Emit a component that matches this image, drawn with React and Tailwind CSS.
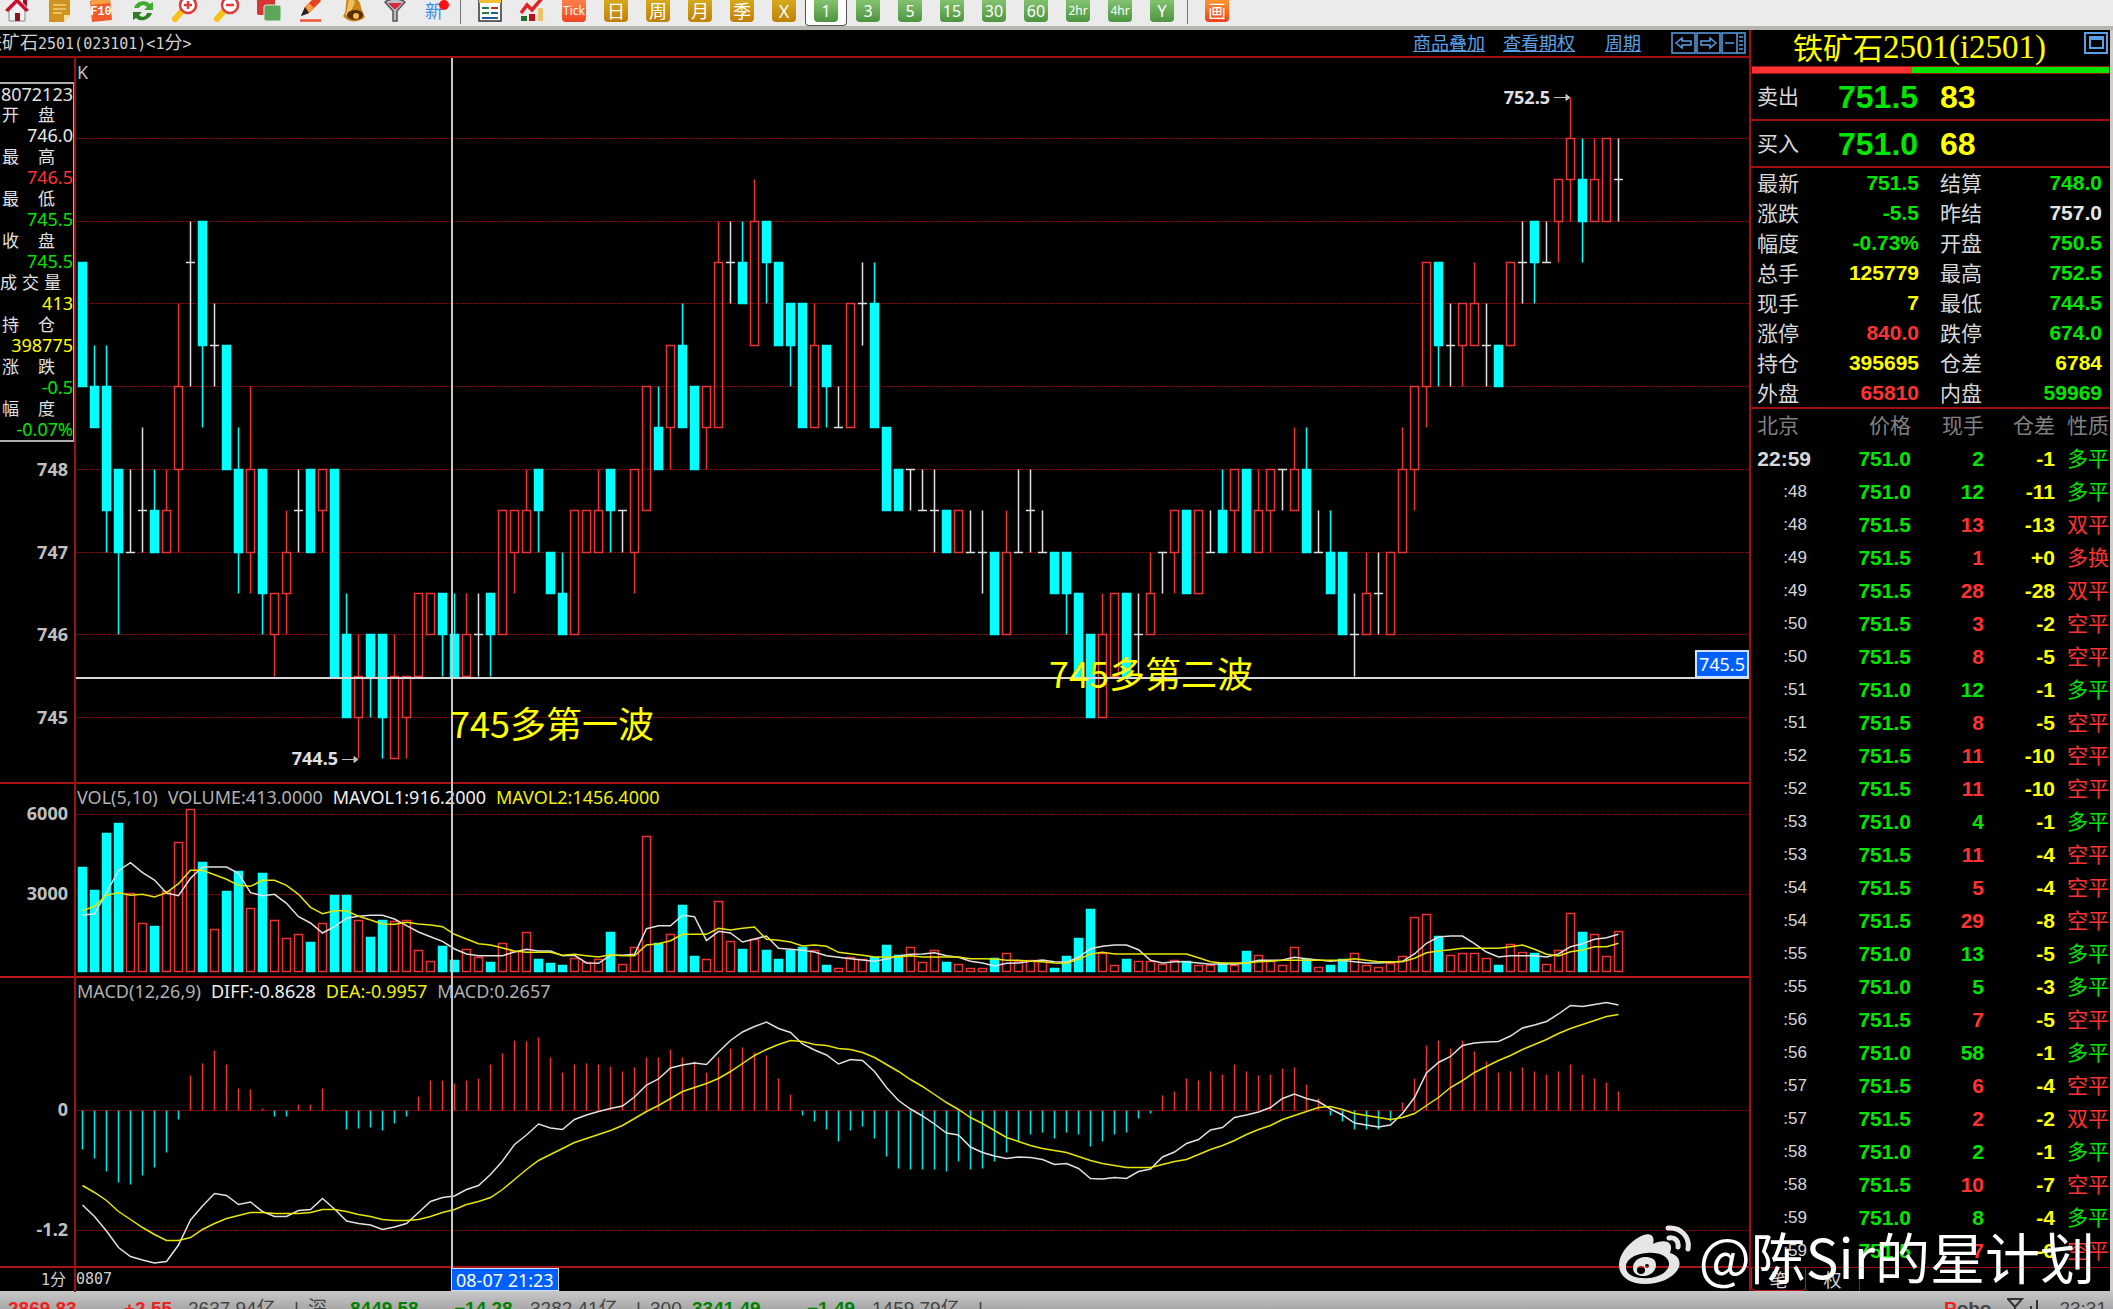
import React from 'react';

// [type, body top, body bottom, high, low] - high/low default to the body
// c = falling, r = rising, w = doji
const candles = [
  ['c', 750.5, 749], ['c', 749, 748.5, 749.5], ['c', 749, 747.5, 749.5, 747], ['c', 748, 747, 748, 746],
  ['w', 747, 747, 748], ['w', 747.5, 747.5, 748.5, 747], ['c', 747.5, 747, 748], ['r', 747.5, 747, 748],
  ['r', 749, 748, 750, 747], ['w', 750.5, 750.5, 751, 749], ['c', 751, 749.5, 751, 748.5], ['w', 749.5, 749.5, 750, 749],
  ['c', 749.5, 748], ['c', 748, 747, 748.5, 746.5], ['r', 748, 747, 749, 746.5], ['c', 748, 746.5, 748, 746],
  ['r', 746.5, 746, 746.5, 745.5], ['r', 747, 746.5, 747.5, 746], ['w', 747.5, 747.5, 748, 747], ['c', 748, 747],
  ['r', 748, 747.5, 748, 747], ['c', 748, 745.5], ['c', 746, 745, 746.5], ['r', 745.5, 745, 746, 744.5],
  ['c', 746, 745.5, 746, 745], ['c', 746, 745, 746, 744.5], ['r', 745.5, 744.5, 746], ['r', 745.5, 745, 745.5, 744.5],
  ['r', 746.5, 745.5], ['r', 746.5, 746], ['c', 746.5, 746, 746.5, 745.5], ['c', 746, 745.5, 746.5],
  ['r', 746, 745.5, 746.5], ['w', 746, 746, 746.5, 745.5], ['c', 746.5, 746, 746.5, 745.5], ['r', 747.5, 746],
  ['r', 747.5, 747, 747.5, 746.5], ['r', 747.5, 747, 748], ['c', 748, 747.5, 748, 747], ['c', 747, 746.5],
  ['c', 746.5, 746, 747], ['r', 747.5, 746], ['r', 747.5, 747], ['r', 747.5, 747, 748],
  ['c', 748, 747.5, 748, 747], ['w', 747.5, 747.5, 747.5, 747], ['r', 748, 747, 748, 746.5], ['r', 749, 747.5],
  ['c', 748.5, 748, 749], ['r', 749.5, 748.5, 749.5, 748], ['c', 749.5, 748.5, 750], ['c', 749, 748],
  ['r', 749, 748.5, 749, 748], ['r', 750.5, 748.5, 751], ['w', 750.5, 750.5, 751, 750], ['c', 750.5, 750, 751],
  ['r', 751, 749.5, 751.5], ['c', 751, 750.5, 751, 750], ['c', 750.5, 749.5], ['c', 750, 749.5, 750, 749],
  ['c', 750, 748.5], ['r', 749.5, 748.5, 750], ['c', 749.5, 749, 749.5, 748.5], ['w', 748.5, 748.5, 749],
  ['r', 750, 748.5], ['w', 750, 750, 750.5, 749.5], ['c', 750, 748.5, 750.5], ['c', 748.5, 747.5],
  ['c', 748, 747.5], ['w', 748, 748, 748, 747.5], ['w', 747.5, 747.5, 748], ['w', 747.5, 747.5, 748, 747],
  ['c', 747.5, 747], ['r', 747.5, 747], ['w', 747, 747, 747.5], ['w', 747, 747, 747.5, 746.5],
  ['c', 747, 746], ['r', 747, 746, 747.5], ['w', 747, 747, 748], ['w', 747.5, 747.5, 748, 747],
  ['w', 747, 747, 747.5], ['c', 747, 746.5], ['c', 747, 746.5, 747, 746], ['c', 746.5, 745.5],
  ['c', 746, 745], ['r', 746, 745, 746.5], ['r', 746.5, 745.5], ['c', 746.5, 745.5],
  ['w', 746, 746, 746.5, 745.5], ['r', 746.5, 746, 747], ['w', 747, 747, 747, 746.5], ['r', 747.5, 747, 747.5, 746.5],
  ['c', 747.5, 746.5], ['r', 747.5, 746.5], ['w', 747, 747, 747.5], ['c', 747.5, 747, 748],
  ['r', 748, 747.5, 748, 747], ['c', 748, 747], ['r', 747.5, 747, 748], ['r', 748, 747.5, 748, 747],
  ['w', 748, 748, 748, 747.5], ['r', 748, 747.5, 748.5], ['c', 748, 747, 748.5], ['w', 747, 747, 747.5],
  ['c', 747, 746.5, 747.5], ['c', 747, 746], ['w', 746, 746, 746.5, 745.5], ['r', 746.5, 746, 747],
  ['w', 746.5, 746.5, 747, 746], ['r', 747, 746], ['r', 748, 747, 748.5], ['r', 749, 748, 749, 747.5],
  ['r', 750.5, 749, 750.5, 748.5], ['c', 750.5, 749.5, 750.5, 749], ['w', 749.5, 749.5, 750, 749], ['r', 750, 749.5, 750, 749],
  ['r', 750, 749.5, 750.5], ['w', 749.5, 749.5, 750, 749], ['c', 749.5, 749], ['r', 750.5, 749.5],
  ['w', 750.5, 750.5, 751, 750], ['c', 751, 750.5, 751, 750], ['w', 750.5, 750.5, 751], ['r', 751.5, 751, 751.5, 750.5],
  ['r', 752, 751.5, 752.5, 751], ['c', 751.5, 751, 752, 750.5], ['r', 751.5, 751, 752], ['r', 752, 751],
  ['w', 751.5, 751.5, 752, 751],
];

// volume bar heights, in thirds of a pixel
const volumes = [
  311, 244, 415, 445, 233, 143, 136, 239, 387, 486, 328, 125, 239, 301, 188, 293, 152, 98, 112, 86, 143, 229, 229, 152, 103,
  153, 150, 152, 62, 31, 76, 32, 66, 43, 28, 85, 60, 116, 35, 23, 18, 40, 28, 35, 117, 22, 71, 404, 83, 112, 199, 45, 35,
  211, 89, 67, 97, 63, 35, 64, 73, 62, 18, 8, 43, 37, 41, 77, 48, 71, 27, 62, 27, 22, 9, 8, 38, 53, 30, 34, 29, 9, 45, 100,
  185, 53, 17, 36, 31, 31, 22, 34, 31, 17, 17, 24, 19, 59, 48, 30, 17, 71, 37, 13, 17, 35, 53, 17, 13, 25, 44, 162, 170,
  104, 48, 53, 53, 40, 18, 80, 58, 54, 21, 62, 175, 117, 112, 45, 120,
];
const volumeTypes =
  'ccccrrcrrrcrccrcrrrcrccrccrrrrccrrcrrrcccrrrcrrrcrccrrrcrccccrcr' +
  'rrcccrrrcrrrcrrrrccccrrcrrrrcrrcrcrrrrcrccrrrrrrrcrrrrcrrcrrrcrrr';

const ma5 = [
  436, 431, 368, 302, 278, 308, 330, 369, 377, 325, 291, 291, 291, 310, 368, 377, 373, 400, 440, 459, 489, 470, 445, 439,
  436, 436, 447, 467, 486, 500, 514, 537, 552, 557, 557, 557, 546, 538, 543, 543, 557, 556, 579, 580, 556, 556, 553, 476,
  467, 467, 436, 440, 512, 484, 489, 516, 507, 498, 535, 538, 541, 546, 557, 562, 566, 570, 574, 567, 558, 553, 552, 548,
  557, 562, 574, 579, 588, 580, 579, 574, 570, 575, 577, 562, 536, 529, 525, 525, 539, 571, 579, 575, 575, 579, 583, 581,
  583, 579, 571, 571, 570, 562, 566, 570, 574, 571, 575, 579, 579, 577, 574, 552, 520, 501, 498, 498, 521, 546, 561, 557,
  557, 557, 561, 552, 530, 521, 508, 503, 493,
];
const ma10 = [
  422, 409, 376, 368, 376, 373, 381, 368, 341, 301, 301, 314, 328, 346, 349, 331, 331, 346, 373, 412, 431, 422, 422, 439,
  450, 462, 463, 457, 462, 465, 470, 493, 507, 521, 525, 534, 543, 547, 547, 547, 556, 553, 557, 561, 554, 557, 557, 525,
  521, 512, 493, 493, 493, 475, 480, 475, 471, 508, 511, 516, 528, 525, 529, 547, 551, 556, 561, 561, 561, 557, 561, 561,
  561, 561, 566, 566, 567, 571, 571, 574, 575, 579, 580, 568, 552, 547, 552, 552, 552, 552, 552, 552, 552, 563, 575, 579,
  579, 579, 575, 574, 571, 571, 571, 571, 571, 570, 566, 571, 575, 575, 575, 565, 548, 543, 539, 535, 535, 535, 535, 530,
  525, 538, 553, 558, 545, 540, 530, 530, 520,
];

// both in pixels above the zero line, diff is worked out from them
const macd = [
  -39, -48, -61, -72, -74, -65, -57, -42, -9, 35, 47, 60, 46, 22, 21, 2, -6, -6, 6, 6, 22, 1, -19, -18, -17, -20, -13, -6,
  14, 30, 30, 27, 30, 32, 46, 57, 70, 69, 73, 53, 38, 46, 47, 46, 44, 39, 43, 53, 53, 61, 53, 49, 38, 53, 62, 63, 58, 55,
  32, 16, -5, -11, -19, -31, -20, -16, -28, -46, -58, -59, -59, -59, -61, -51, -59, -58, -51, -42, -31, -24, -22, -28, -22,
  -24, -36, -31, -24, -22, -8, -3, 15, 19, 32, 30, 39, 36, 46, 39, 35, 36, 42, 43, 26, 12, -5, -11, -19, -19, -19, -11, 8,
  32, 65, 70, 62, 70, 59, 49, 38, 39, 43, 39, 36, 39, 46, 36, 32, 28, 19,
];
const dea = [
  -75, -82, -90, -101, -109, -117, -124, -130, -130, -127, -119, -113, -108, -105, -102, -102, -103, -103, -103, -102, -99,
  -99, -101, -104, -106, -109, -110, -110, -109, -106, -102, -99, -94, -91, -87, -79, -69, -59, -50, -44, -38, -32, -28,
  -24, -20, -15, -8, -1, 5, 12, 19, 23, 27, 32, 39, 47, 55, 61, 66, 70, 69, 66, 65, 62, 61, 58, 53, 46, 39, 31, 24, 16, 8,
  1, -7, -13, -20, -27, -31, -35, -38, -40, -42, -46, -50, -53, -55, -57, -57, -57, -54, -51, -49, -44, -39, -35, -30, -24,
  -19, -15, -9, -5, -1, 3, 4, 1, -3, -5, -7, -9, -7, -3, 5, 13, 23, 30, 38, 44, 50, 55, 61, 66, 71, 77, 82, 86, 90, 94, 96,
];

const quotes = [
  ['最新', '751.5', 'g', '结算', '748.0', 'g'],
  ['涨跌', '-5.5', 'g', '昨结', '757.0', 'w'],
  ['幅度', '-0.73%', 'g', '开盘', '750.5', 'g'],
  ['总手', '125779', 'y', '最高', '752.5', 'g'],
  ['现手', '7', 'y', '最低', '744.5', 'g'],
  ['涨停', '840.0', 'r', '跌停', '674.0', 'g'],
  ['持仓', '395695', 'y', '仓差', '6784', 'y'],
  ['外盘', '65810', 'r', '内盘', '59969', 'g'],
];

const ticks = [
  ['22:59', '751.0', 2, '-1', '多平', 'g'], [':48', '751.0', 12, '-11', '多平', 'g'], [':48', '751.5', 13, '-13', '双平', 'r'],
  [':49', '751.5', 1, '+0', '多换', 'r'], [':49', '751.5', 28, '-28', '双平', 'r'], [':50', '751.5', 3, '-2', '空平', 'r'],
  [':50', '751.5', 8, '-5', '空平', 'r'], [':51', '751.0', 12, '-1', '多平', 'g'], [':51', '751.5', 8, '-5', '空平', 'r'],
  [':52', '751.5', 11, '-10', '空平', 'r'], [':52', '751.5', 11, '-10', '空平', 'r'], [':53', '751.0', 4, '-1', '多平', 'g'],
  [':53', '751.5', 11, '-4', '空平', 'r'], [':54', '751.5', 5, '-4', '空平', 'r'], [':54', '751.5', 29, '-8', '空平', 'r'],
  [':55', '751.0', 13, '-5', '多平', 'g'], [':55', '751.0', 5, '-3', '多平', 'g'], [':56', '751.5', 7, '-5', '空平', 'r'],
  [':56', '751.0', 58, '-1', '多平', 'g'], [':57', '751.5', 6, '-4', '空平', 'r'], [':57', '751.5', 2, '-2', '双平', 'r'],
  [':58', '751.0', 2, '-1', '多平', 'g'], [':58', '751.5', 10, '-7', '空平', 'r'], [':59', '751.0', 8, '-4', '多平', 'g'],
  [':59', '751.5', 7, '-6', '空平', 'r'],
];

const textColors = {
  g: 'text-[#00e600]',
  r: 'text-[#ff3232]',
  y: 'text-[#ffff00]',
  w: 'text-[#e6e6e6]',
};
const strokes = { c: '#00ffff', r: '#f03232', w: '#e0e0e0' };

const barX = (i) => 82.5 + i * 12;
const priceY = (p) => Math.round(80 + (752 - p) * 82.7) + 0.5;

const GridLine = ({ y }) => (
  <line x1="77" x2="100%" y1={y} y2={y} stroke="#900000" strokeDasharray="2 1" shapeRendering="crispEdges" />
);

const AxisLabel = ({ y, children }) => (
  <text x="68" y={y + 6} textAnchor="end" className="fill-[#c0c0c0] text-lg font-bold">{children}</text>
);

const Candle = ({ data, i }) => {
  const [type, top, bottom, high = top, low = bottom] = data;
  const x = barX(i);
  const stroke = strokes[type];
  return (
    <g stroke={stroke}>
      {high > top && <line x1={x} x2={x} y1={priceY(high)} y2={priceY(top)} />}
      {low < bottom && <line x1={x} x2={x} y1={priceY(bottom)} y2={priceY(low)} />}
      {type === 'w' ? (
        <line x1={x - 4.5} x2={x + 4.5} y1={priceY(top)} y2={priceY(top)} />
      ) : (
        <rect x={x - 4} width="8" y={priceY(top)} height={priceY(bottom) - priceY(top)} fill={type === 'c' ? stroke : 'none'} />
      )}
    </g>
  );
};

const PriceChart = () => (
  <svg className="block h-full w-full">
    {[752, 751, 750, 749, 748, 747, 746, 745].map((p) => <GridLine key={p} y={priceY(p)} />)}
    {[748, 747, 746, 745].map((p) => <AxisLabel key={p} y={priceY(p)}>{p}</AxisLabel>)}
    <g strokeWidth="1.5">
      {candles.map((c, i) => <Candle key={i} data={c} i={i} />)}
    </g>
    <g className="fill-[#e0e0e0] text-lg font-bold">
      <text x="1550" y="46" textAnchor="end">752.5</text>
      <text x="338" y="707" textAnchor="end">744.5</text>
    </g>
    <g stroke="#c0c0c0" fill="#c0c0c0">
      <path d="M1554 39.5h15M1566 36.500v6l4-3z" />
      <path d="M342 701.5h15M354 698.500v6l4-3z" />
    </g>
  </svg>
);

const linePoints = (ys) => ys.map((y, i) => `${barX(i)},${(y / 3 - 14).toFixed(1)}`).join(' ');

const VolumeChart = () => (
  <svg className="block h-full w-full">
    <GridLine y={30.5} />
    <GridLine y={110.5} />
    <AxisLabel y={30}>6000</AxisLabel>
    <AxisLabel y={110}>3000</AxisLabel>
    <g strokeWidth="1.5">
      {volumes.map((v, i) => {
        const h = Math.round(v / 3);
        const type = volumeTypes[i];
        return (
          <rect key={i} x={barX(i) - 4} width="8" y={187.5 - h} height={h} stroke={strokes[type]} fill={type === 'c' ? strokes.c : 'none'} />
        );
      })}
    </g>
    <polyline points={linePoints(ma5)} fill="none" stroke="#e0e0e0" strokeWidth="1.5" />
    <polyline points={linePoints(ma10)} fill="none" stroke="#e6e600" strokeWidth="1.5" />
  </svg>
);

const macdZero = 132.5;
const macdPoints = (vs) => vs.map((v, i) => `${barX(i)},${macdZero - v}`).join(' ');

const MacdChart = () => (
  <svg className="block h-full w-full">
    <GridLine y={macdZero} />
    <GridLine y={252.5} />
    <AxisLabel y={132}>0</AxisLabel>
    <AxisLabel y={252}>-1.2</AxisLabel>
    <g strokeWidth="1.5">
      {macd.map((v, i) => (
        <line key={i} x1={barX(i)} x2={barX(i)} y1={macdZero} y2={macdZero - v} stroke={v > 0 ? '#f03232' : '#00e8e8'} />
      ))}
    </g>
    <polyline points={macdPoints(dea.map((d, i) => d + macd[i] / 2))} fill="none" stroke="#e0e0e0" strokeWidth="1.5" />
    <polyline points={macdPoints(dea)} fill="none" stroke="#e6e600" strokeWidth="1.5" />
  </svg>
);

const goldTools = ['日', '周', '月', '季', 'X'];
const greenTools = ['1', '3', '5', '15', '30', '60', '2hr', '4hr', 'Y'];

const iconTools = [
  ['主页', <>
    <path d="M19 3h4v8l-4-4z" fill="#a01020" />
    <path d="M5 14l8-8 8 8v11H5z" fill="#f0f0f0" stroke="#888" />
    <path d="m1 14 12-12 12 12-3 2-9-9-9 9z" fill="#c8102e" />
    <path d="M11 17h5v8h-5z" fill="#8c1420" />
  </>],
  ['新闻', <>
    <path d="M3 1h21v18l-6 7H3z" fill="#cf9420" />
    <path d="M18 26v-7h6z" fill="#f7e2a0" />
    <path d="M7 9h13M7 13h13M7 17h9" stroke="#f0cf80" strokeWidth="1.5" />
  </>],
  ['F10', <>
    <path d="M2 5 22 2l2 22-20 2z" fill="#f05a28" />
    <path d="M3 4 22 2v5L3 9z" fill="#f8a040" />
    <text x="13" y="19" textAnchor="middle" className="fill-white font-['Liberation_Mono',monospace] text-[12px] font-bold">F10</text>
  </>],
  ['刷新', <>
    <path d="M4 12c3-8 12-8 16-4l3-2v8h-9l3-3c-3-3-7-2-8 1z" fill="#43a832" />
    <path d="M22 17c-3 8-12 9-16 5l-3 2v-8h9l-3 3c3 3 7 2 8-2z" fill="#2f7d22" />
  </>],
  ['放大', <>
    <path d="m3 23 6-7" stroke="#f6c21a" strokeWidth="6" strokeLinecap="round" />
    <circle cx="16" cy="9" r="8" fill="#fff" stroke="#e03a3a" strokeWidth="2.5" />
    <path d="M12 9h8M16 5v8" stroke="#e03a3a" strokeWidth="2.5" />
  </>],
  ['缩小', <>
    <path d="m3 23 6-7" stroke="#f6c21a" strokeWidth="6" strokeLinecap="round" />
    <circle cx="16" cy="9" r="8" fill="#fff" stroke="#e03a3a" strokeWidth="2.5" />
    <path d="M12 9h8" stroke="#e03a3a" strokeWidth="2.5" />
  </>],
  ['叠加', <>
    <rect x="1" y="1" width="18" height="18" rx="2" fill="#d83434" />
    <rect x="8" y="9" width="17" height="16" rx="2" fill="#5da55a" stroke="#dfeedd" />
  </>],
  ['画线', <>
    <path d="m3 20 4-9L18 0l5 5-12 12z" fill="#e8401c" />
    <path d="m7 11 4-4 5 5-5 5z" fill="#f79a3a" />
    <path d="m3 20 4-9 4 6z" fill="#222" />
    <path d="M2 24.500h21" stroke="#f0533a" strokeWidth="2.500" />
  </>],
  ['预警', <>
    <path d="M7 3c8-4 14 2 14 9l4 9c-6 6-17 6-22-1 4-5 2-11 4-17z" fill="#c98416" />
    <path d="M9 4c3-1 5 0 6 2l-5 12-5 1c3-5 2-10 4-15z" fill="#f0c060" />
    <ellipse cx="15" cy="19" rx="8" ry="5" fill="#5a2d08" />
    <circle cx="16" cy="20" r="3" fill="#f5c04a" />
  </>],
  ['过滤', <>
    <path d="M3 6c5-4 15-4 20 0l-8 9v10h-4V15z" fill="#b9bec4" stroke="#555" strokeWidth="1.5" />
    <path d="M6 7h14l-6 6h-2z" fill="#d62a3a" />
  </>],
];

const chartTools = [
  ['报价', <>
    <rect x="2" y="1" width="22" height="24" fill="#fff" stroke="#333" strokeWidth="1.5" />
    <path d="M2 1h22v6H2z" fill="#f5c030" />
    <path d="M5 12h7M5 17h7" stroke="#2a7a40" strokeWidth="2" />
    <path d="M14 12h7" stroke="#d22" strokeWidth="2" />
    <path d="M14 17h7M5 22h16" stroke="#235a9a" strokeWidth="2" />
  </>],
  ['走势', <>
    <path d="m2 17 6-8 5 5L24 1" fill="none" stroke="#e02424" strokeWidth="3.500" />
    <path d="M2 20h6v5H2z" fill="#1f6f2c" />
    <path d="M10 18h6v7h-6z" fill="#b11" />
    <path d="M19 12h5v13h-5z" fill="#e9c46a" />
  </>],
];

const ToolButton = ({ label, children }) => (
  <button aria-label={label} className="flex h-[26px] w-[42px] shrink-0 items-end justify-center pb-1">
    {children}
  </button>
);

const Icon = ({ children }) => <svg viewBox="0 0 26 26" className="h-[26px] w-[26px] shrink-0">{children}</svg>;

const tile = 'flex h-[26px] w-6 shrink-0 items-center justify-center rounded pt-1 text-white';

const Toolbar = () => (
  <div className="h-[30px] shrink-0 overflow-hidden border-b-4 border-[#b8b4b0] bg-[#ebebeb]">
    <div className="-ml-1 flex h-[26px]">
      {iconTools.map(([label, art]) => <ToolButton key={label} label={label}><Icon>{art}</Icon></ToolButton>)}
      <ToolButton label="新">
        <span className="relative flex h-[26px] w-6 items-center pt-1 text-lg text-[#3a8ee6]">
          新
          <span className="absolute top-1 right-0 h-2.5 w-2.5 rounded-full bg-[#ff1010]" />
        </span>
      </ToolButton>
      <span className="mr-2 ml-[2px] h-6 w-px bg-[#777]" />
      {chartTools.map(([label, art]) => <ToolButton key={label} label={label}><Icon>{art}</Icon></ToolButton>)}
      <ToolButton><span className={`${tile} bg-linear-to-b from-[#ff8a50] to-[#ee4422] text-xs`}>Tick</span></ToolButton>
      {goldTools.map((t) => (
        <ToolButton key={t}><span className={`${tile} bg-linear-to-b from-[#d8b020] to-[#c08008] text-lg`}>{t}</span></ToolButton>
      ))}
      {greenTools.map((t) => (
        <div key={t} className={t === '1' ? 'rounded-b border border-t-0 border-[#555] bg-white' : ''}>
          <button className={`flex h-[25px] items-end justify-center pb-[3px] ${t === '1' ? 'w-10' : 'w-[42px]'}`}>
            <span className={`${tile} bg-linear-to-b from-[#8ccb78] to-[#4d9440] ${t.length > 2 ? 'text-xs' : 'text-base'}`}>{t}</span>
          </button>
        </div>
      ))}
      <span className="mr-2 ml-1 h-6 w-px bg-[#777]" />
      <ToolButton><span className={`${tile} bg-linear-to-b from-[#ffa030] to-[#f03a20] text-lg`}>画</span></ToolButton>
    </div>
  </div>
);

const infoRows = [
  ['开盘', '746.0', 'w'], ['最高', '746.5', 'r'], ['最低', '745.5', 'g'], ['收盘', '745.5', 'g'],
  ['成交量', '413', 'y'], ['持仓', '398775', 'y'], ['涨跌', '-0.5', 'g'], ['幅度', '-0.07%', 'g'],
];

const InfoBox = () => (
  <div className="absolute top-6 left-0 flex w-[75px] flex-col items-end overflow-hidden border-2 border-l-0 border-[#b0b0b0] bg-black text-lg leading-[21px] text-[#e0e0e0]">
    <span className="leading-5">8072123</span>
    {infoRows.map(([label, value, color]) => (
      <React.Fragment key={label}>
        <span className={`flex w-full text-[17px] ${label.length > 2 ? '-ml-1 gap-[5px]' : 'gap-[19px] pl-0.5'}`}>
          {label.split('').map((ch) => <span key={ch}>{ch}</span>)}
        </span>
        <span className={textColors[color]}>{value}</span>
      </React.Fragment>
    ))}
  </div>
);

const PanelIcons = () => (
  <svg viewBox="0 0 76 22" className="h-[22px] w-[76px]" fill="none" stroke="#5aa0e6" strokeWidth="1.5">
    <rect x="1" y="1" width="23" height="20" />
    <rect x="26" y="1" width="23" height="20" />
    <rect x="51" y="1" width="23" height="20" />
    <path d="M5 11l6-5v3h9v4h-9v3zM45 11l-6-5v3h-9v4h9v3zM54 11h9M66 1v20" />
    <path d="M68 5h4M68 9h4M68 13h4M68 17h4" />
  </svg>
);

const TitleBar = () => (
  <div className="flex h-7 shrink-0 items-center justify-between border-b-2 border-[#a01010] pr-0.5">
    <span className="-ml-4 font-['DejaVu_Sans_Mono','Noto_Sans_CJK_SC',monospace] text-[15px] text-[#d0d0d0]">
      <span className="text-lg">铁矿石</span>2501(023101)&lt;1<span className="text-lg">分</span>&gt;
    </span>
    <nav className="flex items-center text-lg text-[#5aa0e6]">
      <a href="#overlay" className="mr-[18px] underline">商品叠加</a>
      <a href="#options" className="mr-[30px] underline">查看期权</a>
      <a href="#period" className="mr-[30px] underline">周期</a>
      <PanelIcons />
    </nav>
  </div>
);

const legend = 'absolute top-0 left-[77px] flex gap-2.5 text-lg leading-[26px] text-[#b0b0b0]';
const note = "absolute font-['Noto_Sans_CJK_SC',sans-serif] text-4xl leading-[54px] text-[#ffff00]";

const Charts = () => (
  <div className="flex min-w-0 flex-1 flex-col">
    <TitleBar />
    <div className="relative flex min-h-0 flex-1 flex-col">
      <section className="relative min-h-0 flex-1 border-b-2 border-[#a81414]">
        <PriceChart />
        <span className="absolute top-0 left-[77px] text-lg text-[#c0c0c0]">K</span>
        <InfoBox />
      </section>
      <section className="relative h-[194px] shrink-0 border-b-2 border-[#c01818]">
        <VolumeChart />
        <p className={legend}>
          <span>VOL(5,10)</span>
          <span>VOLUME:413.0000</span>
          <span className="text-[#f0f0f0]">MAVOL1:916.2000</span>
          <span className="text-[#f0f000]">MAVOL2:1456.4000</span>
        </p>
      </section>
      <section className="relative h-[290px] shrink-0 border-b-2 border-[#a81414]">
        <MacdChart />
        <p className={legend}>
          <span>MACD(12,26,9)</span>
          <span className="text-[#f0f0f0]">DIFF:-0.8628</span>
          <span className="text-[#f0f000]">DEA:-0.9957</span>
          <span>MACD:0.2657</span>
        </p>
      </section>
      {/* y axis rule and crosshair */}
      <div className="absolute inset-y-0 left-[74px] w-0.5 bg-[#a01010]" />
      <div className="absolute inset-y-0 left-[451px] w-0.5 bg-[#c8c8c8]" />
      <div className="absolute top-[619px] right-0 left-[76px] h-0.5 bg-[#d8d8d8]" />
      <span className="absolute top-[592px] right-0 flex h-7 items-center border-2 border-[#d0e0ff] bg-[#0060ff] px-0.5 text-lg text-white">745.5</span>
      <span className={`${note} top-[637px] left-[450px]`}>745多第一波</span>
      <span className={`${note} top-[587px] left-[1049px]`}>745多第二波</span>
    </div>
    <div className="relative flex h-[23px] shrink-0 items-center font-['DejaVu_Sans_Mono','Noto_Sans_CJK_SC',monospace] text-[15px] text-[#d0d0d0]">
      <span className="w-[76px] border-r-2 border-[#a01010] pr-2 text-right">1<span className="text-base">分</span></span>
      <span>0807</span>
      <span className="absolute top-0 left-[451px] flex h-full items-center border border-[#d0e0ff] bg-[#0060ff] px-1 font-['Noto_Sans',sans-serif] text-lg text-white">08-07 21:23</span>
    </div>
  </div>
);

const OrderRow = ({ label, price, amount }) => (
  <div className="flex h-[47px] items-center border-b-2 border-[#a01010] pl-1.5">
    <span className="w-[81px] text-[21px]">{label}</span>
    <span className="w-[102px] font-['Liberation_Sans',sans-serif] text-[32px] font-bold text-[#00e600]">{price}</span>
    <span className="font-['Liberation_Sans',sans-serif] text-[32px] font-bold text-[#ffff00]">{amount}</span>
  </div>
);

const number = "text-right font-['Liberation_Sans',sans-serif] font-bold";

const QuotePanel = () => (
  <aside className="flex w-[364px] shrink-0 flex-col border-r-[3px] border-l-2 border-r-[#d0ccc8] border-l-[#a01010] text-[21px] text-[#d8d8d8]">
    <header className="relative flex h-9 items-center justify-center font-['Liberation_Serif','Noto_Sans_CJK_SC',serif] text-[33px] text-[#ffff00]">
      <h1 className="mr-[22px] flex items-center"><span className="text-[30px]">铁矿石</span>2501(i2501)</h1>
      <button aria-label="窗口" className="absolute top-0.5 right-0.5">
        <svg viewBox="0 0 24 22" className="h-[22px] w-6" fill="none" stroke="#5aa0e6" strokeWidth="2">
          <rect x="1" y="1" width="22" height="20" />
          <path d="M6 5h13v11H6zM6 7h13" />
        </svg>
      </button>
    </header>
    <div className="flex h-2 border-y border-[#a01010] px-px">
      <div className="w-[160px] bg-[#ff3232]" />
      <div className="flex-1 bg-[#00e600]" />
    </div>
    <OrderRow label="卖出" price="751.5" amount="83" />
    <OrderRow label="买入" price="751.0" amount="68" />
    <div className="h-[241px] border-b-2 border-[#a01010]">
      <table className="w-full">
        <tbody>
          {quotes.map(([l1, v1, c1, l2, v2, c2]) => (
            <tr key={l1} className="h-[30px] leading-[30px]">
              <th className="w-[56px] pl-1.5 text-left font-normal">{l1}</th>
              <td className={`w-[112px] ${number} ${textColors[c1]}`}>{v1}</td>
              <th className="pl-[21px] text-left font-normal">{l2}</th>
              <td className={`pr-2 ${number} ${textColors[c2]}`}>{v2}</td>
            </tr>
          ))}
        </tbody>
      </table>
    </div>
    <table className="w-full table-fixed">
      <thead>
        <tr className="h-[33px] text-[#808080]">
          <th className="w-[60px] pl-1.5 text-left font-normal">北京</th>
          <th className="w-[100px] text-right font-normal">价格</th>
          <th className="w-[73px] text-right font-normal">现手</th>
          <th className="w-[71px] text-right font-normal">仓差</th>
          <th className="pl-3 text-left font-normal whitespace-nowrap">性质</th>
        </tr>
      </thead>
      <tbody>
        {ticks.map(([time, price, amount, diff, kind, color], i) => (
          <tr key={i} className="h-[33px] leading-[33px]">
            <td className={i === 0 ? number : "pr-1 text-right font-['Liberation_Sans',sans-serif] text-[17px]"}>{time}</td>
            <td className={`${number} text-[#00e600]`}>{price}</td>
            <td className={`${number} ${textColors[color]}`}>{amount}</td>
            <td className={`${number} text-[#ffff00]`}>{diff}</td>
            <td className={`pl-3 whitespace-nowrap ${textColors[color]}`}>{kind}</td>
          </tr>
        ))}
      </tbody>
    </table>
    <div className="flex min-h-0 flex-1 border-t border-[#a01010] text-lg leading-6">
      <button className="w-[55px] rounded-b border border-t-0 border-[#c01818]">笔</button>
      <button className="w-[54px] border-r border-[#a01010]">权</button>
    </div>
  </aside>
);

const StatusBar = () => (
  <footer className="flex h-[18px] shrink-0 overflow-hidden bg-linear-to-b from-[#c8c8c8] to-[#a8a8a8] pt-1.5 font-['Liberation_Sans','Noto_Sans_CJK_SC',sans-serif] text-[19px] leading-6 whitespace-nowrap text-[#444]">
    <span className="w-[116px] pl-2 font-bold text-[#f02020]">2869.83</span>
    <span className="w-[72px] pl-2 font-bold text-[#f02020]">+2.55</span>
    <span className="w-[106px]">2637.94亿</span>
    <span className="w-[14px]">|</span>
    <span className="w-[42px]">深</span>
    <span className="w-[104px] font-bold text-[#008000]">8449.58</span>
    <span className="w-[76px] font-bold text-[#008000]">−14.28</span>
    <span className="w-[106px]">3282.41亿</span>
    <span className="w-[14px]">|</span>
    <span className="w-[42px]">300</span>
    <span className="w-[115px] font-bold text-[#008000]">3341.49</span>
    <span className="w-[65px] font-bold text-[#008000]">−1.49</span>
    <span className="w-[106px]">1459.79亿</span>
    <span>|</span>
    <span className="ml-auto font-bold"><span className="text-[#f02020]">P</span>obo</span>
    <svg viewBox="0 0 36 20" className="mx-4 h-5 w-9" fill="none" stroke="#333" strokeWidth="2">
      <path d="M1 2h14L8 10zM8 10v10M24 9v11M30 3v17" />
    </svg>
    <span className="pr-1.5">23:31</span>
  </footer>
);

const Watermark = () => (
  <div className="absolute right-[18px] bottom-6 flex items-start gap-2 text-white">
    <svg viewBox="0 0 72 60" className="h-[60px] w-[72px]" fill="#e6e6e6">
      <path
        fillRule="evenodd"
        d="M32 10c3 2 3 6 2 9 6-3 14-4 17 0 2 3 1 6 0 9 8 2 11 8 9 14-4 10-18 17-34 17C10 59 0 51 0 40 0 30 8 20 17 14c6-4 12-6 15-4zM28 28C15 29 6 35 7 43s11 11 23 10 21-8 20-15-10-11-22-10z"
      />
      <path
        fillRule="evenodd"
        d="M26 32c-7 0-12 5-12 11s5 8 11 8 12-5 12-11-5-8-11-8zM22 41a4 4 0 1 1 0 8 4 4 0 0 1 0-8zM28 39a2 2 0 1 1 0 4 2 2 0 0 1 0-4z"
      />
      <path d="M49 3c13-1 22 9 20 21M50 13c6-1 10 3 9 9" fill="none" stroke="#e6e6e6" strokeWidth="5" strokeLinecap="round" />
    </svg>
    <span className="font-['Noto_Sans_CJK_SC',sans-serif] text-[55px] leading-[60px]">@陈Sir的星计划</span>
  </div>
);

export default function App() {
  return (
    <div className="relative flex h-screen flex-col overflow-hidden bg-black font-['Noto_Sans','Noto_Sans_CJK_SC',sans-serif]">
      <Toolbar />
      <main className="flex min-h-0 flex-1">
        <Charts />
        <QuotePanel />
      </main>
      <StatusBar />
      <Watermark />
    </div>
  );
}
